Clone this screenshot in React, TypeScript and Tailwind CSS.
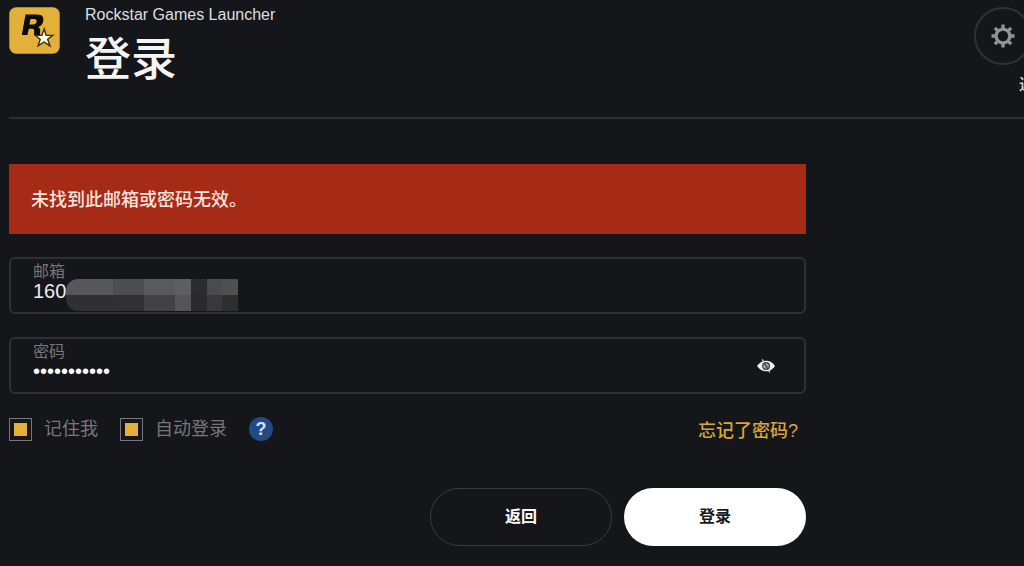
import { useState } from "react";

const MOSAIC = [
  ["bg-[#57575b]", "bg-[#57575b]", "bg-[#57575b]", "bg-[#4d4d51]", "bg-[#4d4d51]", "bg-[#5a5a5e]", "bg-[#5a5a5e]", "bg-[#5f5f61]", "bg-[#2c2c30]", "bg-[#4a4a4f]", "bg-[#50504f]"],
  ["bg-[#303034]", "bg-[#303034]", "bg-[#303031]", "bg-[#313131]", "bg-[#303035]", "bg-[#414146]", "bg-[#414146]", "bg-[#555556]", "bg-[#2a2a2b]", "bg-[#38383d]", "bg-[#2e2e30]"],
];

function Logo() {
  return (
    <svg viewBox="0 0 52 48" className="h-12 w-13 shrink-0" role="img" aria-label="Rockstar Games">
      <rect x="0.3" y="0.3" width="50.4" height="46.4" rx="7" fill="#e3b03a" />
      <path
        fillRule="evenodd"
        fill="#0d0b06"
        d="M16.5 7.5H28C33.5 7.5 35 10.3 34.2 14.3C33.6 17.3 31.8 19.3 29 20.1C31 21 31.3 22.4 31.1 24.2C30.9 26.2 31 27.5 31.5 28.5H25.3C24.8 27.4 25.1 25.8 25.2 24.2C25.3 22.4 24.5 21.8 22.6 21.8H19.8L18.4 28H12.8ZM21.5 12L20.4 17.4H24C26.2 17.4 27.2 16.6 27.6 14.7C27.9 12.8 27.2 12 25.2 12Z"
      />
      <path
        d="M35.2 22L37.2 28.4H43.8L38.7 32.3L41 38.9L35.1 35L29.1 38.9L31.2 32.5L26.6 28.4H32.9Z"
        fill="#fffbe8"
        stroke="#3a2f10"
        strokeWidth="1.4"
        strokeLinejoin="miter"
      />
    </svg>
  );
}

function Gear() {
  return (
    <svg viewBox="0 0 24 24" className="size-6" aria-hidden="true">
      <circle cx="12" cy="12" r="6.9" fill="none" stroke="#929295" strokeWidth="3.4" />
      <g stroke="#929295" strokeWidth="3.4">
        <path d="M12 0.5V4.5M12 19.5V23.5M0.5 12H4.5M19.5 12H23.5" />
        <path d="M3.9 3.9L6.7 6.7M17.3 17.3L20.1 20.1M3.9 20.1L6.7 17.3M17.3 6.7L20.1 3.9" />
      </g>
    </svg>
  );
}

function HiddenEye() {
  return (
    <svg viewBox="0 0 20 14" className="h-3.5 w-5" aria-hidden="true">
      <path d="M1 7C4 2.8 7 1.8 10 1.8S16 2.8 19 7C16 11.2 13 12.2 10 12.2S4 11.2 1 7Z" fill="#f1f1f4" />
      <circle cx="10" cy="7" r="3.4" fill="#a5a5aa" stroke="#3a3a40" strokeWidth="1.2" />
      <path d="M8 4L12.2 10.2" stroke="#3a3a40" strokeWidth="1.2" />
      <path d="M6.2 0.4L8.2 3.4M12.2 10.6L13.8 13.4" stroke="#d8d8dc" strokeWidth="1.2" />
    </svg>
  );
}

function Check({ id, label }: { id: string; label: string }) {
  return (
    <label htmlFor={id} className="flex items-center gap-3 text-lg leading-6 text-[#77777a]">
      <input
        id={id}
        type="checkbox"
        defaultChecked
        className="size-[23px] shrink-0 appearance-none border border-[#77777a] bg-clip-content p-1 checked:bg-[#e3b03a]"
      />
      {label}
    </label>
  );
}

export default function App() {
  const [visible, setVisible] = useState(false);
  return (
    <div className="min-h-screen overflow-hidden bg-[#15161a] pl-[9px] font-['Liberation_Sans','Noto_Sans_CJK_SC',sans-serif] text-white">
      <header className="flex h-[119px] items-start border-b-2 border-[#2e2f33] pt-[7px]">
        <Logo />
        <div className="ml-6 flex-1">
          <p className="text-base leading-4 text-[#dedee0]">Rockstar Games Launcher</p>
          <h1 className="text-[46px] leading-[72px] font-medium text-[#f4f4f5]">登录</h1>
        </div>
        <div className="-mr-2 flex flex-col items-end gap-3">
          <button
            type="button"
            aria-label="设置"
            className="flex size-[58px] items-center justify-center rounded-full border-2 border-[#303135]"
          >
            <Gear />
          </button>
          <span className="w-[13px] overflow-hidden text-base leading-4 font-medium whitespace-nowrap text-[#cfcfd1]">返回</span>
        </div>
      </header>

      <main className="w-4/5 max-w-[797px] pt-[45px]">
        <div role="alert" className="flex h-[70px] items-center bg-[#a62b17] px-[22px] pt-px text-lg font-medium text-[#fbe3dd]">
          未找到此邮箱或密码无效。
        </div>

        <form onSubmit={(e) => e.preventDefault()}>
          <div className="relative mt-[23px] h-[57px] rounded-md border-2 border-[#303034] px-[22px] pt-1">
            <label htmlFor="email" className="block text-base leading-[18px] text-[#77777a]">邮箱</label>
            <input
              id="email"
              type="text"
              defaultValue="160"
              className="block h-5 w-full bg-transparent text-xl leading-5 text-[#ededee] outline-none"
            />
            <div className="absolute top-5 left-[55px] w-[172px] overflow-hidden rounded-l-xl" aria-hidden="true">
              {MOSAIC.map((row, r) => (
                <div key={r} className="flex">
                  {row.map((color, c) => (
                    <span key={c} className={`h-4 flex-1 ${color}`} />
                  ))}
                </div>
              ))}
            </div>
          </div>

          <div className="mt-[23px] flex h-[57px] rounded-md border-2 border-[#303034] pr-7 pl-[22px]">
            <div className="flex-1 pt-1">
              <label htmlFor="password" className="block text-base leading-[18px] text-[#77777a]">密码</label>
              <input
                id="password"
                type={visible ? "text" : "password"}
                defaultValue="abcdefghijk"
                className="block h-5 w-full bg-transparent text-xl leading-5 text-white outline-none"
              />
            </div>
            <button type="button" aria-label="显示密码" onClick={() => setVisible(!visible)}>
              <HiddenEye />
            </button>
          </div>

          <div className="mt-[21px] flex h-7 items-center">
            <Check id="remember" label="记住我" />
            <div className="ml-[22px]">
              <Check id="auto" label="自动登录" />
            </div>
            <button
              type="button"
              aria-label="帮助"
              className="ml-[22px] flex size-6 items-center justify-center rounded-full bg-[#234a85] text-lg leading-6 font-bold text-[#d4e2f5]"
            >
              ?
            </button>
            <a href="#forgot" className="mr-2 ml-auto pt-1 text-lg leading-7 font-medium text-[#d9a63a]">忘记了密码?</a>
          </div>

          <div className="mt-[45px] flex justify-end gap-3">
            <button type="button" className="h-[58px] w-[182px] rounded-full border border-[#3a3b3f] text-base font-bold">
              返回
            </button>
            <button type="submit" className="h-[58px] w-[182px] rounded-full bg-white text-base font-bold text-[#1b1b1d]">
              登录
            </button>
          </div>
        </form>
      </main>
    </div>
  );
}
